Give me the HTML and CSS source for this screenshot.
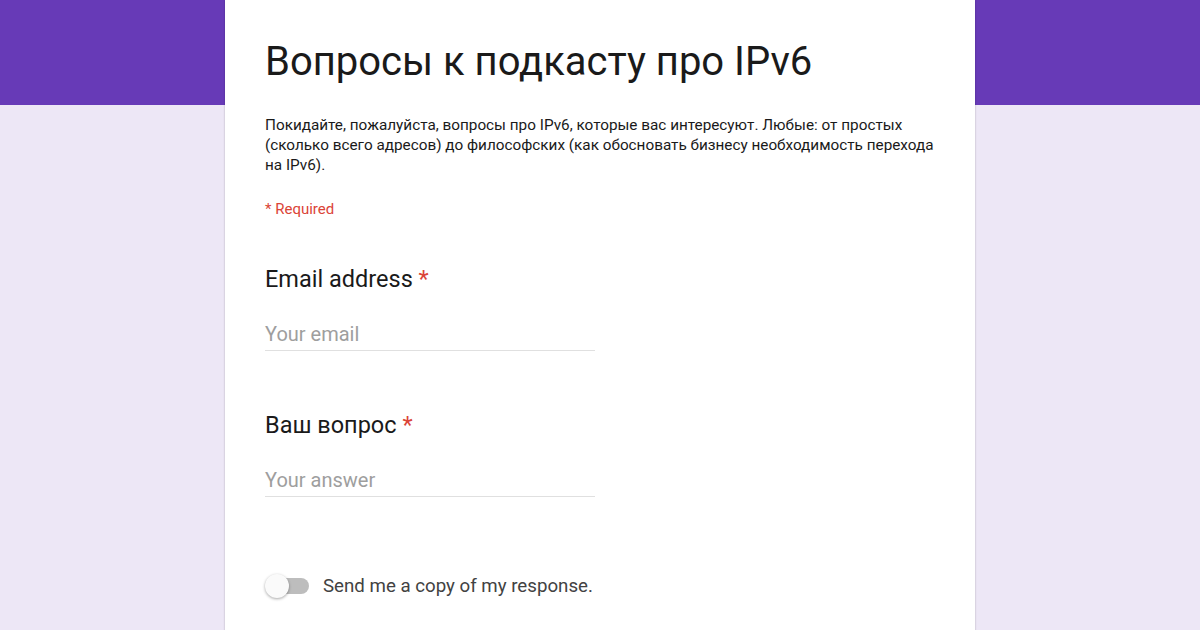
FILE: index.html
```html
<!DOCTYPE html>
<html lang="ru">
<head>
    <meta charset="UTF-8">
    <title>Вопросы к подкасту про IPv6</title>
    <link rel="stylesheet" href="styles.css">
</head>
<body>

<div class="form-card">
    <h1 class="form-title">Вопросы к подкасту про IPv6</h1>
    <p class="form-desc">Покидайте, пожалуйста, вопросы про IPv6, которые вас интересуют. Любые: от простых (сколько всего адресов) до философских (как обосновать бизнесу необходимость перехода на IPv6).</p>
    <p class="required-note">* Required</p>

    <div class="question">
        <div class="question-title">Email address <span class="star">*</span></div>
        <div class="answer">Your email</div>
    </div>

    <div class="question">
        <div class="question-title">Ваш вопрос <span class="star">*</span></div>
        <div class="answer">Your answer</div>
    </div>

    <div class="copy-row">
        <span class="toggle"><span class="toggle-knob"></span></span>
        <span class="copy-label">Send me a copy of my response.</span>
    </div>
</div>

</body>
</html>
```

FILE: styles.css
```css
html, body {
    margin: 0;
    padding: 0;
}

body {
    font-family: Roboto, "Noto Sans", sans-serif;
    background: linear-gradient(to bottom, #673ab7 0, #673ab7 105px, #ede7f6 105px);
    min-height: 100vh;
    overflow: hidden;
}

.form-card {
    width: 750px;
    margin: 0 auto;
    background: #fff;
    box-sizing: border-box;
    padding: 38px 40px 80px 40px;
    min-height: 800px;
    box-shadow: 0 0 2px rgba(0, 0, 0, 0.25);
}

.form-title {
    margin: 0;
    font-size: 40px;
    font-weight: 400;
    line-height: 48px;
    color: #1a1a1a;
}

.form-desc {
    margin: 29px 0 0 0;
    font-size: 15.3px;
    line-height: 20px;
    color: #1a1a1a;
}

.required-note {
    margin: 24px 0 0 0;
    font-size: 15px;
    line-height: 20px;
    color: #db4437;
}

.question {
    margin-top: 45px;
}

.question + .question {
    margin-top: 59px;
}

.question-title {
    font-size: 23.5px;
    line-height: 30px;
    color: #1a1a1a;
}

.star {
    color: #db4437;
}

.answer {
    width: 330px;
    margin-top: 28px;
    padding-bottom: 4px;
    font-size: 20px;
    line-height: 24px;
    color: #9e9e9e;
    border-bottom: 1px solid #e0e0e0;
}

.copy-row {
    display: flex;
    align-items: center;
    gap: 14px;
    margin-top: 77px;
}

.toggle {
    position: relative;
    display: inline-block;
    width: 42px;
    height: 16px;
    margin-left: 2px;
    border-radius: 8px;
    background: #bdbdbd;
}

.toggle-knob {
    position: absolute;
    left: -2px;
    top: -4px;
    width: 24px;
    height: 24px;
    border-radius: 50%;
    background: #fafafa;
    box-shadow: 0 1px 3px rgba(0, 0, 0, 0.35);
}

.copy-label {
    font-size: 18.7px;
    line-height: 24px;
    color: #424242;
}
```
